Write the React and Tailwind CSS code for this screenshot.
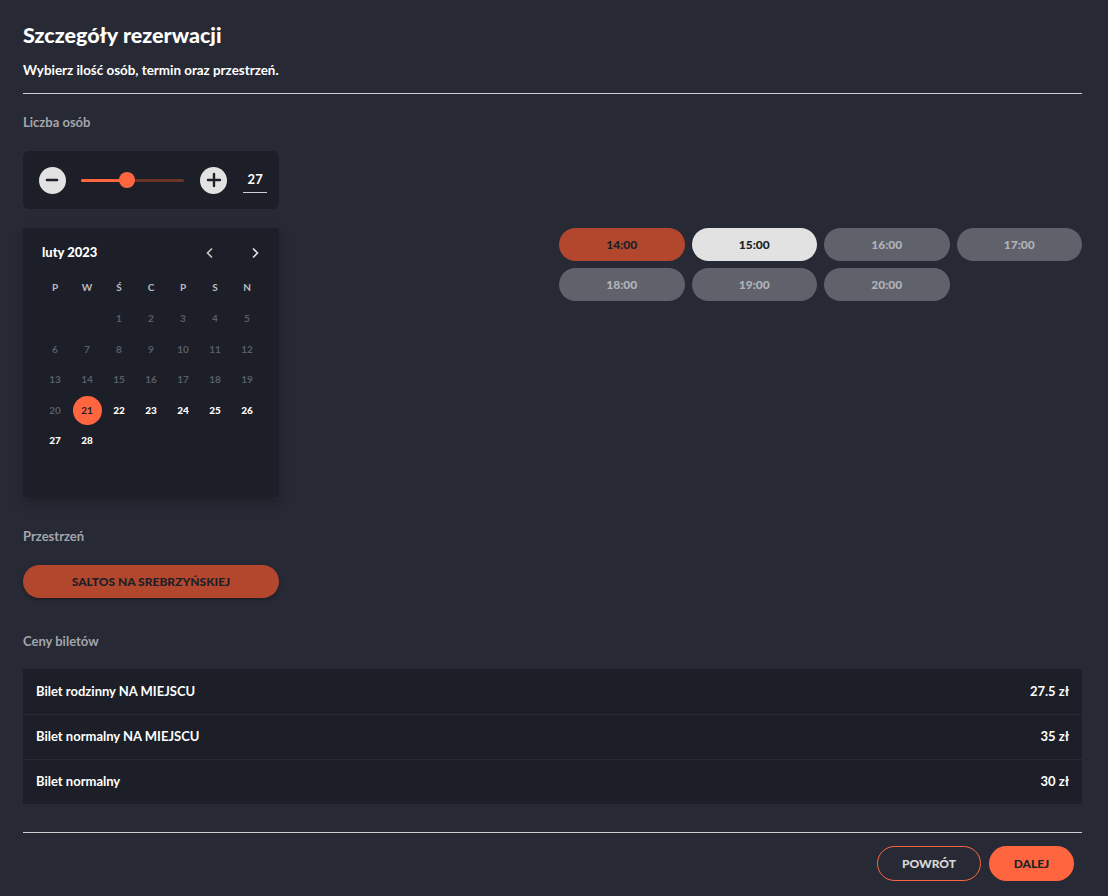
import React, { useState } from "react";

const days = [
  [null, null, 1, 2, 3, 4, 5],
  [6, 7, 8, 9, 10, 11, 12],
  [13, 14, 15, 16, 17, 18, 19],
  [20, 21, 22, 23, 24, 25, 26],
  [27, 28, null, null, null, null, null],
];

const hours = [
  { label: "14:00", state: "picked" },
  { label: "15:00", state: "free" },
  { label: "16:00", state: "off" },
  { label: "17:00", state: "off" },
  { label: "18:00", state: "off" },
  { label: "19:00", state: "off" },
  { label: "20:00", state: "off" },
];

const tickets = [
  { name: "Bilet rodzinny NA MIEJSCU", price: "27.5 zł" },
  { name: "Bilet normalny NA MIEJSCU", price: "35 zł" },
  { name: "Bilet normalny", price: "30 zł" },
];

const RoundBtn = ({ children }) => (
  <button className="w-[27px] h-[27px] rounded-full bg-[#e2e2e2] flex items-center justify-center">
    {children}
  </button>
);

const App = () => {
  const [people] = useState(27);

  return (
    <div
      className="min-h-[896px] bg-[#272a35] text-white pl-[23px] pr-[26px] pt-[24px] pb-[14px]"
      style={{ fontFamily: "Lato, 'Noto Sans', sans-serif" }}
    >
      <h1 className="text-[21.5px] font-black leading-[22px]">Szczegóły rezerwacji</h1>
      <p className="text-[13.4px] font-bold mt-[16px] leading-[16px]">Wybierz ilość osób, termin oraz przestrzeń.</p>
      <hr className="border-0 border-t border-[#cfcfcf] mt-[15px]" />

      <p className="text-[13px] font-bold text-[#a3a5ab] mt-[20px] leading-[16px]">Liczba osób</p>

      <div className="w-[256px] h-[58px] bg-[#1c1f27] rounded-[6px] mt-[21px] flex items-center pl-[16px] pr-[12px]">
        <RoundBtn>
          <svg width="14" height="14" viewBox="0 0 14 14">
            <path d="M2 7h10" stroke="#1c1f27" strokeWidth="2.6" strokeLinecap="round" />
          </svg>
        </RoundBtn>
        <div className="relative w-[105px] h-[16px] ml-[15px] flex items-center">
          <div className="absolute left-0 right-0 h-[3px] bg-[#6a3429] rounded-full" />
          <div className="absolute left-0 w-[46px] h-[3px] bg-[#ff6640] rounded-full" />
          <div className="absolute left-[38px] w-[16px] h-[16px] rounded-full bg-[#ff6640]" />
        </div>
        <div className="ml-[16px]">
          <RoundBtn>
            <svg width="16" height="16" viewBox="0 0 16 16">
              <path d="M2 8h12M8 2v12" stroke="#1c1f27" strokeWidth="2.4" strokeLinecap="round" />
            </svg>
          </RoundBtn>
        </div>
        <div className="ml-[16px] w-[24px] text-center border-b border-[#cfcfcf] text-[13px] font-bold pb-[3px] mt-[3px]">
          {people}
        </div>
      </div>

      <div className="grid grid-cols-[529px_523px] gap-[7px] mt-[19px]">
        <div className="w-[256px] h-[269px] bg-[#1c1f27] shadow-[0_6px_12px_rgba(0,0,0,0.25)] px-[16px] pt-[16px]">
          <div className="flex items-center h-[18px]">
            <span className="text-[13px] font-black ml-[3px]">luty 2023</span>
            <svg className="ml-auto mr-[35px]" width="10" height="12" viewBox="0 0 10 12">
              <path d="M7 1.5 2.5 6 7 10.5" fill="none" stroke="#c8c8c8" strokeWidth="1.6" />
            </svg>
            <svg className="mr-[3px]" width="10" height="12" viewBox="0 0 10 12">
              <path d="M3 1.5 7.5 6 3 10.5" fill="none" stroke="#e0e0e0" strokeWidth="1.6" />
            </svg>
          </div>
          <div className="grid grid-cols-7 mt-[17px] text-[10px] font-bold text-[#b9bbc0]">
            {["P", "W", "Ś", "C", "P", "S", "N"].map((d, i) => (
              <div key={i} className="h-[16px] flex items-center justify-center">{d}</div>
            ))}
          </div>
          <div className="mt-[9px] flex flex-col gap-[1.5px]">
            {days.map((row, r) => (
              <div key={r} className="grid grid-cols-7">
                {row.map((d, i) => {
                  const active = d !== null && d >= 21;
                  const picked = d === 21;
                  return (
                    <div key={i} className="h-[29px] flex items-center justify-center">
                      {d !== null && (
                        <span
                          className={
                            picked
                              ? "w-[29px] h-[29px] rounded-full bg-[#ff6640] text-[#1c1f27] flex items-center justify-center text-[10px] font-bold"
                              : active
                              ? "text-[10px] font-black text-white"
                              : "text-[10px] font-bold text-[#5a5d66]"
                          }
                        >
                          {d}
                        </span>
                      )}
                    </div>
                  );
                })}
              </div>
            ))}
          </div>
        </div>

        <div className="grid grid-cols-4 gap-[7px] content-start">
          {hours.map((h) => (
            <button
              key={h.label}
              className={
                "h-[33px] rounded-full text-[12px] font-black " +
                (h.state === "picked"
                  ? "bg-[#b3472e] text-[#1c1f27]"
                  : h.state === "free"
                  ? "bg-[#e2e2e2] text-[#1c1f27]"
                  : "bg-[#5f626b] text-[#b0b2b8]")
              }
            >
              {h.label}
            </button>
          ))}
        </div>
      </div>

      <p className="text-[13px] font-bold text-[#a3a5ab] mt-[31px] leading-[16px]">Przestrzeń</p>
      <button className="w-[256px] h-[33px] rounded-full bg-[#b3472e] text-[#1c1f27] text-[12px] font-black mt-[21px] shadow-[0_2px_4px_rgba(0,0,0,0.3)]">
        SALTOS NA SREBRZYŃSKIEJ
      </button>

      <p className="text-[13px] font-bold text-[#a3a5ab] mt-[35px] leading-[16px]">Ceny biletów</p>
      <div className="bg-[#1c1f27] mt-[20px] flex flex-col">
        {tickets.map((t, i) => (
          <div
            key={t.name}
            className={
              "h-[45px] flex items-center justify-between px-[13px] text-[13px] font-bold " +
              (i > 0 ? "border-t border-[#272a35]" : "")
            }
          >
            <span>{t.name}</span>
            <span>{t.price}</span>
          </div>
        ))}
      </div>

      <hr className="border-0 border-t border-[#cfcfcf] mt-[28px]" />
      <div className="flex justify-end gap-[8px] mt-[13px] pr-[8px]">
        <button className="w-[104px] h-[35px] rounded-full border border-[#ff6640] text-[#d6d6d6] text-[12px] font-black">
          POWRÓT
        </button>
        <button className="w-[85px] h-[35px] rounded-full bg-[#ff6640] text-[#1c1f27] text-[12px] font-black">
          DALEJ
        </button>
      </div>
    </div>
  );
};

export default App;
